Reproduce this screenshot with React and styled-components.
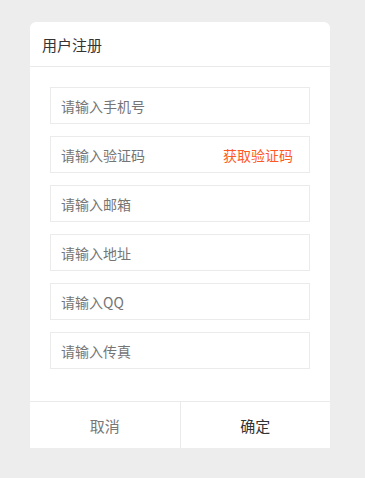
import React from 'react';
import styled, { createGlobalStyle } from 'styled-components';

const GlobalStyle = createGlobalStyle`
  html, body {
    margin: 0;
    padding: 0;
    background: #ededed;
    font-family: "Noto Sans CJK SC", "Liberation Sans", sans-serif;
  }
`;

const Page = styled.div`
  width: 365px;
  height: 478px;
  padding: 22px 0 0 30px;
  box-sizing: border-box;
`;

const Dialog = styled.div`
  width: 300px;
  background: #fff;
  border-radius: 6px 6px 0 0;
  overflow: hidden;
`;

const Header = styled.div`
  height: 44px;
  display: flex;
  align-items: center;
  padding: 0 12px;
  border-bottom: 1px solid #eaeaea;
  font-size: 15px;
  color: #333;
`;

const Body = styled.div`
  display: flex;
  flex-direction: column;
  gap: 12px;
  padding: 20px 20px 32px;
`;

const Field = styled.div`
  height: 37px;
  box-sizing: border-box;
  border: 1px solid #ebebeb;
  display: flex;
  align-items: center;
  padding: 0 16px 0 10px;
`;

const Input = styled.input`
  flex: 1;
  min-width: 0;
  border: none;
  outline: none;
  padding: 0;
  font: inherit;
  font-size: 14px;
  color: #333;
  background: transparent;
  &::placeholder {
    color: #757575;
  }
`;

const CodeLink = styled.span`
  font-size: 14px;
  color: #ff5a1f;
  cursor: pointer;
`;

const Footer = styled.div`
  display: flex;
  border-top: 1px solid #eaeaea;
  height: 46px;
`;

const FooterButton = styled.button`
  flex: 1;
  border: none;
  background: #fff;
  font: inherit;
  font-size: 15px;
  color: ${props => (props.primary ? '#333' : '#777')};
  cursor: pointer;
  & + & {
    border-left: 1px solid #eaeaea;
  }
`;

const fields = ['请输入手机号', '请输入验证码', '请输入邮箱', '请输入地址', '请输入QQ', '请输入传真'];

export default function App() {
  return (
    <Page>
      <GlobalStyle />
      <Dialog>
        <Header>用户注册</Header>
        <Body>
          {fields.map((f, i) => (
            <Field key={f}>
              <Input placeholder={f} />
              {i === 1 && <CodeLink>获取验证码</CodeLink>}
            </Field>
          ))}
        </Body>
        <Footer>
          <FooterButton>取消</FooterButton>
          <FooterButton primary>确定</FooterButton>
        </Footer>
      </Dialog>
    </Page>
  );
}
